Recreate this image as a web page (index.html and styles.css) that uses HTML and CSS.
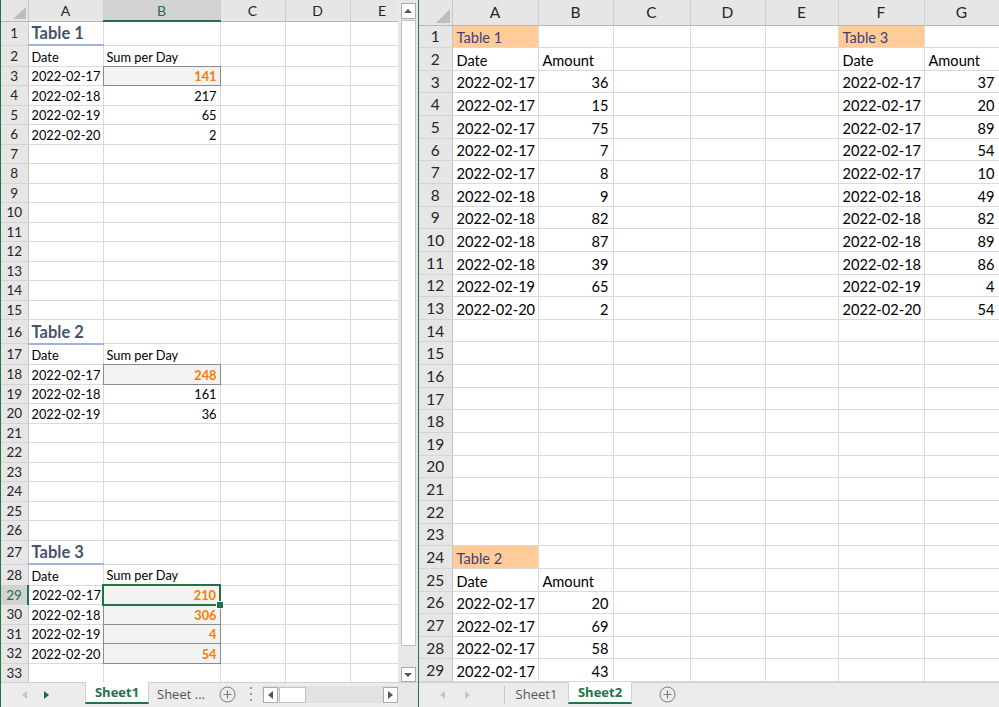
FILE: index.html
```html
<!DOCTYPE html>
<html>
<head>
<meta charset="utf-8">
<link rel="stylesheet" href="styles.css">
</head>
<body>
<div class="app">
  <section class="win win-left">
    <div class="sheet">
      <div class="clip clip-l">
        <table class="grid grid-l">
          <colgroup><col class="c-rh"><col class="c-a"><col class="c-b"><col class="c-c"><col class="c-d"><col class="c-e"></colgroup>
          <tr class="hdr"><th class="corner"><svg width="14" height="13" viewBox="0 0 14 13"><polygon points="13,0 13,12 0,12" fill="#bdbdbd"/></svg></th><th>A</th><th class="csel">B</th><th>C</th><th>D</th><th>E</th></tr>
          <tr class="rt"><th>1</th><td class="title">Table 1</td><td></td><td></td><td></td><td></td></tr>
          <tr class="rh2"><th>2</th><td>Date</td><td>Sum per Day</td><td></td><td></td><td></td></tr>
          <tr><th>3</th><td class="num">2022-02-17</td><td class="calc">141</td><td></td><td></td><td></td></tr>
          <tr><th>4</th><td class="num">2022-02-18</td><td class="num">217</td><td></td><td></td><td></td></tr>
          <tr><th>5</th><td class="num">2022-02-19</td><td class="num">65</td><td></td><td></td><td></td></tr>
          <tr><th>6</th><td class="num">2022-02-20</td><td class="num">2</td><td></td><td></td><td></td></tr>
          <tr><th>7</th><td></td><td></td><td></td><td></td><td></td></tr>
          <tr><th>8</th><td></td><td></td><td></td><td></td><td></td></tr>
          <tr><th>9</th><td></td><td></td><td></td><td></td><td></td></tr>
          <tr><th>10</th><td></td><td></td><td></td><td></td><td></td></tr>
          <tr><th>11</th><td></td><td></td><td></td><td></td><td></td></tr>
          <tr><th>12</th><td></td><td></td><td></td><td></td><td></td></tr>
          <tr><th>13</th><td></td><td></td><td></td><td></td><td></td></tr>
          <tr><th>14</th><td></td><td></td><td></td><td></td><td></td></tr>
          <tr><th>15</th><td></td><td></td><td></td><td></td><td></td></tr>
          <tr class="rt"><th>16</th><td class="title">Table 2</td><td></td><td></td><td></td><td></td></tr>
          <tr class="rh2"><th>17</th><td>Date</td><td>Sum per Day</td><td></td><td></td><td></td></tr>
          <tr><th>18</th><td class="num">2022-02-17</td><td class="calc">248</td><td></td><td></td><td></td></tr>
          <tr><th>19</th><td class="num">2022-02-18</td><td class="num">161</td><td></td><td></td><td></td></tr>
          <tr><th>20</th><td class="num">2022-02-19</td><td class="num">36</td><td></td><td></td><td></td></tr>
          <tr><th>21</th><td></td><td></td><td></td><td></td><td></td></tr>
          <tr><th>22</th><td></td><td></td><td></td><td></td><td></td></tr>
          <tr><th>23</th><td></td><td></td><td></td><td></td><td></td></tr>
          <tr><th>24</th><td></td><td></td><td></td><td></td><td></td></tr>
          <tr><th>25</th><td></td><td></td><td></td><td></td><td></td></tr>
          <tr><th>26</th><td></td><td></td><td></td><td></td><td></td></tr>
          <tr class="rt"><th>27</th><td class="title">Table 3</td><td></td><td></td><td></td><td></td></tr>
          <tr class="rh2"><th>28</th><td>Date</td><td>Sum per Day</td><td></td><td></td><td></td></tr>
          <tr><th class="rsel">29</th><td class="num">2022-02-17</td><td class="calc sel">210</td><td></td><td></td><td></td></tr>
          <tr><th>30</th><td class="num">2022-02-18</td><td class="calc">306</td><td></td><td></td><td></td></tr>
          <tr><th>31</th><td class="num">2022-02-19</td><td class="calc">4</td><td></td><td></td><td></td></tr>
          <tr><th>32</th><td class="num">2022-02-20</td><td class="calc">54</td><td></td><td></td><td></td></tr>
          <tr><th>33</th><td></td><td></td><td></td><td></td><td></td></tr>
        </table>
      </div>
      <div class="vscroll">
        <div class="sbtn"><span class="tri-up"></span></div>
        <div class="vthumb"></div>
        <div class="vtrack"></div>
        <div class="sbtn sbtn-down"><span class="tri-down"></span></div>
      </div>
    </div>
    <div class="tabbar tabbar-l">
      <div class="nav nav-l"><span class="tri-left off"></span><span class="tri-right on"></span></div>
      <div class="tab active tab-l1">Sheet1</div>
      <div class="tab tab-l2">Sheet ...</div>
      <div class="plus plus-l"><svg width="17" height="17" viewBox="0 0 17 17"><circle cx="8.5" cy="8.5" r="7.5" fill="none" stroke="#7a7a7a" stroke-width="1"/><path d="M8.5 4.5v8M4.5 8.5h8" stroke="#7a7a7a" stroke-width="1.2"/></svg></div>
      <div class="dots"><svg width="4" height="16" viewBox="0 0 4 16"><rect x="1" y="1" width="2" height="2" fill="#9a9a9a"/><rect x="1" y="7" width="2" height="2" fill="#9a9a9a"/><rect x="1" y="13" width="2" height="2" fill="#9a9a9a"/></svg></div>
      <div class="hscroll">
        <div class="hbtn"><span class="tri-left dark"></span></div>
        <div class="hthumb"></div>
        <div class="htrack"></div>
        <div class="hbtn"><span class="tri-right dark"></span></div>
      </div>
      <div class="corner-box"></div>
    </div>
  </section>

  <section class="win win-right">
    <div class="clip clip-r">
      <table class="grid grid-r">
        <colgroup><col class="r-rh"><col class="r-a"><col class="r-b"><col class="r-c"><col class="r-d"><col class="r-e"><col class="r-f"><col class="r-g"></colgroup>
        <tr class="hdr"><th class="corner"><svg width="15" height="15" viewBox="0 0 15 15"><polygon points="14,0 14,14 0,14" fill="#bdbdbd"/></svg></th><th>A</th><th>B</th><th>C</th><th>D</th><th>E</th><th>F</th><th>G</th></tr>
        <tr><th>1</th><td class="inp">Table 1</td><td></td><td></td><td></td><td></td><td class="inp">Table 3</td><td></td></tr>
        <tr><th>2</th><td>Date</td><td>Amount</td><td></td><td></td><td></td><td>Date</td><td>Amount</td></tr>
        <tr><th>3</th><td class="num">2022-02-17</td><td class="num">36</td><td></td><td></td><td></td><td class="num">2022-02-17</td><td class="num">37</td></tr>
        <tr><th>4</th><td class="num">2022-02-17</td><td class="num">15</td><td></td><td></td><td></td><td class="num">2022-02-17</td><td class="num">20</td></tr>
        <tr><th>5</th><td class="num">2022-02-17</td><td class="num">75</td><td></td><td></td><td></td><td class="num">2022-02-17</td><td class="num">89</td></tr>
        <tr><th>6</th><td class="num">2022-02-17</td><td class="num">7</td><td></td><td></td><td></td><td class="num">2022-02-17</td><td class="num">54</td></tr>
        <tr><th>7</th><td class="num">2022-02-17</td><td class="num">8</td><td></td><td></td><td></td><td class="num">2022-02-17</td><td class="num">10</td></tr>
        <tr><th>8</th><td class="num">2022-02-18</td><td class="num">9</td><td></td><td></td><td></td><td class="num">2022-02-18</td><td class="num">49</td></tr>
        <tr><th>9</th><td class="num">2022-02-18</td><td class="num">82</td><td></td><td></td><td></td><td class="num">2022-02-18</td><td class="num">82</td></tr>
        <tr><th>10</th><td class="num">2022-02-18</td><td class="num">87</td><td></td><td></td><td></td><td class="num">2022-02-18</td><td class="num">89</td></tr>
        <tr><th>11</th><td class="num">2022-02-18</td><td class="num">39</td><td></td><td></td><td></td><td class="num">2022-02-18</td><td class="num">86</td></tr>
        <tr><th>12</th><td class="num">2022-02-19</td><td class="num">65</td><td></td><td></td><td></td><td class="num">2022-02-19</td><td class="num">4</td></tr>
        <tr><th>13</th><td class="num">2022-02-20</td><td class="num">2</td><td></td><td></td><td></td><td class="num">2022-02-20</td><td class="num">54</td></tr>
        <tr><th>14</th><td></td><td></td><td></td><td></td><td></td><td></td><td></td></tr>
        <tr><th>15</th><td></td><td></td><td></td><td></td><td></td><td></td><td></td></tr>
        <tr><th>16</th><td></td><td></td><td></td><td></td><td></td><td></td><td></td></tr>
        <tr><th>17</th><td></td><td></td><td></td><td></td><td></td><td></td><td></td></tr>
        <tr><th>18</th><td></td><td></td><td></td><td></td><td></td><td></td><td></td></tr>
        <tr><th>19</th><td></td><td></td><td></td><td></td><td></td><td></td><td></td></tr>
        <tr><th>20</th><td></td><td></td><td></td><td></td><td></td><td></td><td></td></tr>
        <tr><th>21</th><td></td><td></td><td></td><td></td><td></td><td></td><td></td></tr>
        <tr><th>22</th><td></td><td></td><td></td><td></td><td></td><td></td><td></td></tr>
        <tr><th>23</th><td></td><td></td><td></td><td></td><td></td><td></td><td></td></tr>
        <tr><th>24</th><td class="inp">Table 2</td><td></td><td></td><td></td><td></td><td></td><td></td></tr>
        <tr><th>25</th><td>Date</td><td>Amount</td><td></td><td></td><td></td><td></td><td></td></tr>
        <tr><th>26</th><td class="num">2022-02-17</td><td class="num">20</td><td></td><td></td><td></td><td></td><td></td></tr>
        <tr><th>27</th><td class="num">2022-02-17</td><td class="num">69</td><td></td><td></td><td></td><td></td><td></td></tr>
        <tr><th>28</th><td class="num">2022-02-17</td><td class="num">58</td><td></td><td></td><td></td><td></td><td></td></tr>
        <tr><th>29</th><td class="num">2022-02-17</td><td class="num">43</td><td></td><td></td><td></td><td></td><td></td></tr>
      </table>
    </div>
    <div class="tabbar tabbar-r">
      <div class="nav nav-r"><span class="tri-left off"></span><span class="tri-right off"></span></div>
      <div class="tab tab-r1">Sheet1</div>
      <div class="tab active tab-r2">Sheet2</div>
      <div class="plus plus-r"><svg width="17" height="17" viewBox="0 0 17 17"><circle cx="8.5" cy="8.5" r="7.5" fill="none" stroke="#7a7a7a" stroke-width="1"/><path d="M8.5 4.5v8M4.5 8.5h8" stroke="#7a7a7a" stroke-width="1.2"/></svg></div>
    </div>
  </section>
</div>
</body>
</html>
```

FILE: styles.css
```css
* { box-sizing: border-box; }
html, body { margin: 0; padding: 0; }
body {
  width: 999px;
  height: 707px;
  overflow: hidden;
  background: #ffffff;
  font-family: Lato, "Liberation Sans", sans-serif;
}
.app { display: flex; width: 999px; height: 707px; }

.win { display: flex; flex-direction: column; height: 707px; }
.win-left {
  width: 419px;
  border-left: 1px solid #217346;
  border-right: 1px solid #217346;
}
.win-right { flex: 1; min-width: 0; }

.sheet { display: flex; height: 682px; }
.clip { overflow: hidden; }
.clip-l { width: 397px; height: 682px; }
.clip-r { width: 580px; height: 682px; }

.grid {
  border-collapse: collapse;
  table-layout: fixed;
  color: #000;
}
.grid tr { border-bottom: 1px solid #dadada; }
.grid col { border-right: 1px solid #dadada; }
.grid td {
  padding: 0 3px 1px 3px;
  white-space: nowrap;
  overflow: visible;
  vertical-align: bottom;
}
.grid th {
  background: #e6e6e6;
  font-weight: normal;
  color: #262626;
  padding: 0;
  white-space: nowrap;
  text-align: center;
  border-right: 1px solid #c6c6c6;
  border-bottom: 1px solid #d4d4d4;
}
.grid tr.hdr th {
  border-right: 1px solid #d0d0d0;
  border-bottom: 1px solid #b8b8b8;
  vertical-align: middle;
}
.grid tr.hdr th.corner { border-right: 1px solid #c6c6c6; text-align: right; vertical-align: bottom; }
.corner svg { display: block; margin: 0 1px 1px auto; }

.num { text-align: right; }

/* Left sheet */
.grid-l { width: 413px; font-size: 12.8px; }
.c-rh { width: 27px; }
.c-a { width: 75px; }
.c-b { width: 117px; }
.c-c { width: 65px; }
.c-d { width: 65px; }
.c-e { width: 64px; }
.grid-l tr { height: 19.5px; }
.grid-l tr.hdr { height: 21px; }
.grid-l tr.rt { height: 24px; }
.grid-l tr.rh2 { height: 21px; }
.grid-l th { font-size: 13.5px; }
.grid-l tr.hdr th { font-size: 14px; }

.title {
  font-weight: bold;
  font-size: 16.5px;
  color: #44546a;
  border-bottom: 2px solid #9db4e0;
}
.calc {
  background: #f2f2f2;
  color: #fa7d00;
  font-weight: bold;
  text-align: right;
  border: 1px solid #8a8a8a;
}
.sel {
  border: 2px solid #217346;
  position: relative;
}
.sel::after {
  content: "";
  position: absolute;
  right: -5px;
  bottom: -5px;
  width: 6px;
  height: 6px;
  background: #217346;
  border: 1px solid #ffffff;
}
.grid tr.hdr th.csel {
  background: #d2d2d2;
  color: #217346;
  border-bottom: 2px solid #217346;
}
.grid th.rsel {
  background: #d2d2d2;
  color: #217346;
  border-right: 2px solid #217346;
}

/* Right sheet */
.grid-r { width: 580px; font-size: 14.6px; }
.r-rh { width: 33px; }
.r-a { width: 86px; }
.r-b { width: 75px; }
.r-c { width: 77px; }
.r-d { width: 75px; }
.r-e { width: 73px; }
.r-f { width: 86px; }
.r-g { width: 75px; }
.grid-r tr { height: 22.65px; }
.grid-r tr.hdr { height: 25px; }
.grid-r th { font-size: 15.5px; }
.grid-r td { padding: 0 4px 1px 4px; }
.inp {
  background: #ffcc99;
  color: #3f3f76;
}

/* Vertical scrollbar */
.vscroll {
  width: 20px;
  background: #e8e8e8;
  display: flex;
  flex-direction: column;
  align-items: center;
  padding-top: 3px;
  gap: 1px;
}
.sbtn {
  width: 15px;
  height: 16px;
  background: #ffffff;
  border: 1px solid #ababab;
  display: flex;
  align-items: center;
  justify-content: center;
}
.sbtn-down { height: 15px; margin-bottom: 0; }
.vthumb {
  width: 15px;
  height: 626px;
  background: #ffffff;
  border: 1px solid #c2c2c2;
}
.vtrack { flex: 1; }
.tri-up {
  width: 0; height: 0;
  border-left: 4px solid transparent;
  border-right: 4px solid transparent;
  border-bottom: 4px solid #555;
}
.tri-down {
  width: 0; height: 0;
  border-left: 4px solid transparent;
  border-right: 4px solid transparent;
  border-top: 4px solid #555;
}

/* Tab bars */
.tabbar {
  height: 25px;
  display: flex;
  align-items: stretch;
  background: #ececec;
  border-top: 1px solid #d0d0d0;
  font-family: "Open Sans", "Noto Sans", sans-serif;
  font-size: 13px;
}
.nav { display: flex; align-items: center; }
.nav-l { width: 84px; padding-left: 21px; gap: 17px; }
.nav-r { width: 86px; padding-left: 21px; gap: 20px; border-right: 1px solid #c6c6c6; margin: 3px 0 3px 0; }
.tri-left {
  width: 0; height: 0;
  border-top: 4px solid transparent;
  border-bottom: 4px solid transparent;
  border-right: 5px solid #c4c4c4;
}
.tri-right {
  width: 0; height: 0;
  border-top: 4px solid transparent;
  border-bottom: 4px solid transparent;
  border-left: 5px solid #c4c4c4;
}
.tri-right.on { border-left-color: #1e6b3f; }
.tri-left.dark { border-right-color: #555; }
.tri-right.dark { border-left-color: #555; }

.tab {
  display: flex;
  align-items: center;
  justify-content: center;
  color: #555;
  padding-bottom: 3px;
}
.tab.active {
  background: #ffffff;
  color: #217346;
  font-weight: bold;
  border-bottom: 2px solid #217346;
  border-left: 1px solid #d0d0d0;
  border-right: 1px solid #d0d0d0;
  margin-top: -1px;
  margin-bottom: 3px;
  padding-bottom: 0;
}
.tab-l1 { width: 64px; }
.tab-l2 { width: 66px; justify-content: flex-start; padding-left: 8px; overflow: hidden; white-space: nowrap; }
.tab-r1 { width: 63px; }
.tab-r2 { width: 64px; }

.plus { display: flex; align-items: center; justify-content: center; padding-bottom: 2px; }
.plus-l { width: 24px; }
.plus-r { width: 70px; }
.dots { width: 23px; display: flex; align-items: center; justify-content: center; padding-bottom: 2px; }

.hscroll {
  width: 136px;
  display: flex;
  align-items: center;
  background: #e2e2e2;
  margin: 3px 0 4px 0;
  padding-left: 1px;
}
.hbtn {
  width: 15px;
  height: 16px;
  background: #ffffff;
  border: 1px solid #ababab;
  display: flex;
  align-items: center;
  justify-content: center;
}
.hthumb {
  width: 27px;
  height: 16px;
  background: #ffffff;
  border: 1px solid #c2c2c2;
  margin-left: 1px;
}
.htrack { flex: 1; }
.corner-box { flex: 1; background: #e8e8e8; }
```
